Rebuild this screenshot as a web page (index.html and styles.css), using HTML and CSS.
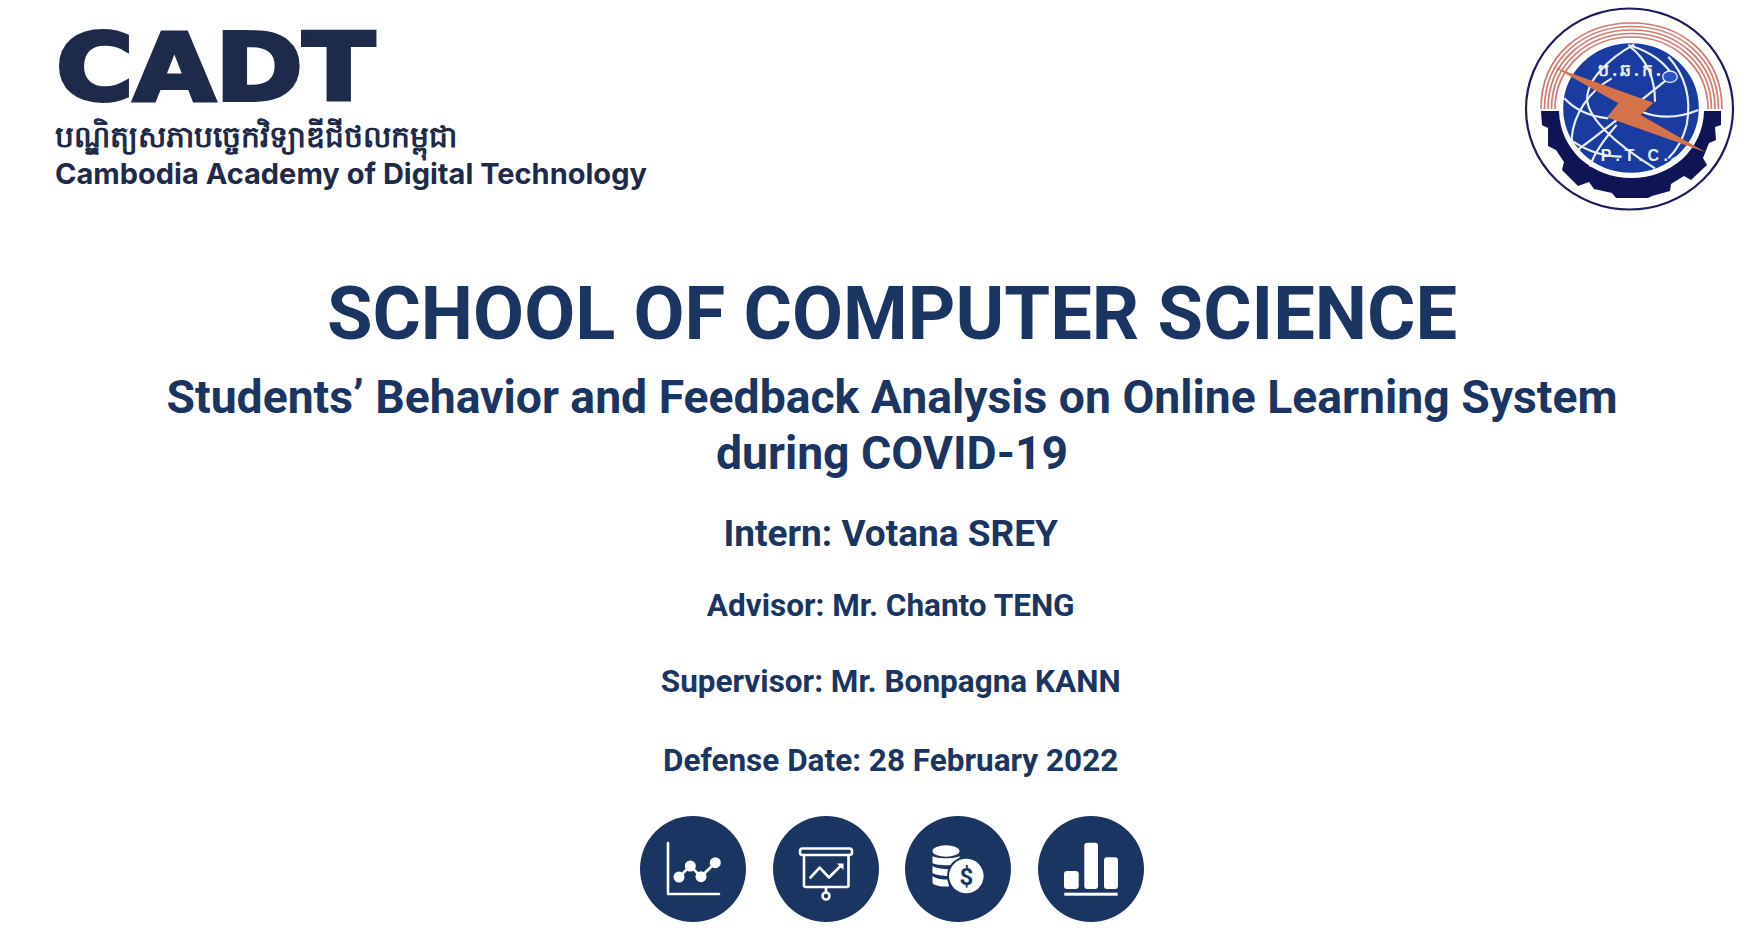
FILE: index.html
```html
<!DOCTYPE html>
<html lang="en">
<head>
<meta charset="utf-8">
<title>Students' Behavior and Feedback Analysis</title>
<link rel="stylesheet" href="styles.css">
</head>
<body>
<div class="slide">
  <header class="top">
    <div class="brand">
      <div class="wordmark">CADT</div>
      <div class="khmer">បណ្ឌិត្យសភាបច្ចេកវិទ្យាឌីជីថលកម្ពុជា</div>
      <div class="english">Cambodia Academy of Digital Technology</div>
    </div>
    <svg class="seal" viewBox="0 0 240 220" aria-label="P.T.C. seal">
      <ellipse cx="119.500" cy="109" rx="103.500" ry="100.500" fill="#fff" stroke="#1c1c5e" stroke-width="2.200"/>
      <g fill="none" stroke="#d9796f" stroke-width="1.700">
        <path d="M31 109C31 55 72 23 121.500 23S212 55 212 109"/>
        <path d="M34.500 109C34.500 58 74 26.500 121.500 26.500S208.500 58 208.500 109"/>
        <path d="M38 109C38 61 76 30 121.500 30S205 61 205 109"/>
        <path d="M41.500 109C41.500 64 78 33.500 121.500 33.500S201.500 64 201.500 109"/>
        <path d="M45 109C45 67 80 37 121.500 37S198 67 198 109"/>
      </g>
      <path class="gear" d="M31 111H49C50 150 82 178 121.500 178S193 150 194 111H211V125L205 127 206 140 199 143 193 158 197 165 181 180 174 176 161 184 160 191 142 196 138 198H106L102 193 84 189 79 182 68 186 52 170 54 162 46 150 38 146 38 128 32 125Z"/>
      <ellipse cx="121" cy="108" rx="69" ry="66" fill="#1a3ba0" stroke="#fff" stroke-width="2.400"/>
      <g transform="translate(45 35) scale(0.3333)">
        <g fill="none" stroke="#e9eef8" stroke-width="6.500">
          <path d="M238 28C160 70 90 140 97 200C105 250 170 320 300 400"/>
          <path d="M170 130C100 170 55 240 50 310C52 325 60 338 75 348"/>
          <path d="M28 190C60 225 110 245 160 250"/>
          <path d="M60 350C120 310 180 260 340 130"/>
          <path d="M340 65C390 120 410 190 395 270C385 310 370 340 340 370"/>
          <path d="M220 30C290 50 340 90 355 130"/>
          <path d="M260 230C310 250 370 250 430 225"/>
          <path d="M185 270C150 310 115 360 105 395"/>
          <path d="M225 35C270 70 300 120 300 200"/>
          <path d="M55 320C100 350 150 365 200 365"/>
          <path d="M350 375C385 360 410 330 425 300"/>
        </g>
        <ellipse cx="345" cy="125" rx="22" ry="17" fill="#2a55c0" stroke="#e9eef8" stroke-width="4"/>
        <polygon points="-4,96 295,203 257,240 452,352 156,247 190,205" fill="#d4734a"/>
        <text class="seal-top" x="228" y="122">ប.ឆ.ក.</text>
        <text class="seal-bottom" x="238" y="378">P . T . C .</text>
      </g>
    </svg>
  </header>

  <main class="content">
    <h1 class="title">SCHOOL OF COMPUTER SCIENCE</h1>
    <h2 class="subtitle">Students’ Behavior and Feedback Analysis on Online Learning System<br>during COVID-19</h2>
    <p class="intern">Intern: Votana SREY</p>
    <p class="meta advisor">Advisor: Mr. Chanto TENG</p>
    <p class="meta supervisor">Supervisor: Mr. Bonpagna KANN</p>
    <p class="meta defense">Defense Date: 28 February 2022</p>
    <div class="icons">
      <svg class="badge" viewBox="0 0 106 106">
        <circle cx="53" cy="53" r="53" class="disc"/>
        <path class="line" d="M28 27V78H79"/>
        <path class="line" d="M39 61L50.300 50L61 60.700L75.300 46.700"/>
        <circle cx="39" cy="61" r="5.500" class="solid"/><circle cx="50.300" cy="50" r="5.500" class="solid"/>
        <circle cx="61" cy="60.700" r="5.500" class="solid"/><circle cx="75.300" cy="46.700" r="5.500" class="solid"/>
      </svg>
      <svg class="badge" viewBox="0 0 106 106">
        <circle cx="53" cy="53" r="53" class="disc"/>
        <rect x="27" y="32.500" width="52" height="6.500" rx="2.500" class="line"/>
        <path class="line" d="M31 39V69.500Q31 71 32.500 71H74Q75.500 71 75.500 69.500V39"/>
        <path class="line" d="M53 71V76"/>
        <circle cx="53" cy="80" r="3.500" class="line"/>
        <path class="line" d="M37.500 61.500L46.700 51.700L56 61.500L68 49.500"/>
        <polygon class="solid" points="64,47.500 70.500,47.500 70.500,54"/>
      </svg>
      <svg class="badge" viewBox="0 0 106 106">
        <circle cx="53" cy="53" r="53" class="disc"/>
        <ellipse cx="41" cy="35" rx="13.500" ry="5.700" class="solid"/>
        <path class="solid" d="M27.500 40C31 43 51 43 54.500 40V47C51 50 31 50 27.500 47Z"/>
        <path class="solid" d="M27.500 50C31 53 45 53.500 48 53L44 60C38 60 30 59 27.500 57Z"/>
        <path class="solid" d="M27.500 60C31 63 38 63.500 43 63.500L44 70.500C38 71 30 70 27.500 67Z"/>
        <circle cx="61.300" cy="60" r="19.300" class="disc"/>
        <circle cx="61.300" cy="60" r="17.300" class="solid"/>
        <text class="dollar" x="61.300" y="68.500">$</text>
      </svg>
      <svg class="badge" viewBox="0 0 106 106">
        <circle cx="53" cy="53" r="53" class="disc"/>
        <rect x="26" y="55" width="14.700" height="18" rx="3" class="solid"/>
        <rect x="46.300" y="26.700" width="13.700" height="46.300" rx="3" class="solid"/>
        <rect x="66" y="41.300" width="14" height="31.700" rx="3" class="solid"/>
        <rect x="26.300" y="76.700" width="53.400" height="3" class="solid"/>
      </svg>
    </div>
  </main>
</div>
</body>
</html>
```
FILE: styles.css
```css
* { box-sizing: border-box; }
html, body { margin: 0; padding: 0; background: #fff; }
.slide {
  width: 1764px;
  height: 936px;
  overflow: hidden;
  display: flex;
  flex-direction: column;
  font-family: Roboto, "Liberation Sans", sans-serif;
  color: #1a3562;
}
.top {
  display: flex;
  justify-content: space-between;
  align-items: flex-start;
  height: 220px;
  padding-left: 55px;
  padding-right: 14px;
}
.brand { padding-top: 24px; color: #1e2a4a; }
.wordmark {
  font-family: "DejaVu Sans", sans-serif;
  font-weight: 700;
  font-size: 93px;
  line-height: 88px;
  height: 101px;
  -webkit-text-stroke: 4px #1e2a4a;
  transform-origin: left center;
  transform: translateX(1px) scaleX(1.135);
}
.khmer { font-size: 29.700px; line-height: 22px; font-weight: 700; font-family: "Noto Sans", sans-serif; }
.english { margin-top: 9px; font-family: Inter, sans-serif; font-weight: 700; font-size: 29px; line-height: 36px; }
.seal { width: 240px; height: 220px; flex: none; }
.gear { fill: #0f1454; }
.seal-top { font-family: "Noto Sans", sans-serif; font-size: 52px; font-weight: 700; fill: #e9eef8; text-anchor: middle; letter-spacing: 9px; }
.seal-bottom { font-family: "Liberation Sans", sans-serif; font-size: 48px; font-weight: 700; fill: #e9eef8; text-anchor: middle; }
.content {
  display: flex;
  flex-direction: column;
  align-items: center;
  padding-left: 20px;
  text-align: center;
}
.title { margin: 52px 0 0; font-size: 74px; line-height: 84px; font-weight: 700; }
.subtitle { margin: 13px 0 0; font-size: 46.300px; line-height: 56px; font-weight: 700; }
.intern { margin: 31px 2.600px 0 0; font-size: 37px; line-height: 44px; font-weight: 700; }
.meta { margin: 0 2.600px 0 0; font-size: 31.500px; line-height: 38px; font-weight: 700; }
.advisor { margin-top: 30.500px; }
.supervisor { margin-top: 38px; }
.defense { margin-top: 41px; }
.icons { display: flex; gap: 26.700px; margin-top: 36px; }
.badge { width: 106px; height: 106px; flex: none; }
.disc { fill: #1a3562; }
.solid { fill: #fff; }
.line { fill: none; stroke: #fff; stroke-width: 2.600; stroke-linecap: round; stroke-linejoin: round; }
.dollar { font-family: Roboto, sans-serif; font-size: 24px; font-weight: 700; fill: #1a3562; text-anchor: middle; }
```
